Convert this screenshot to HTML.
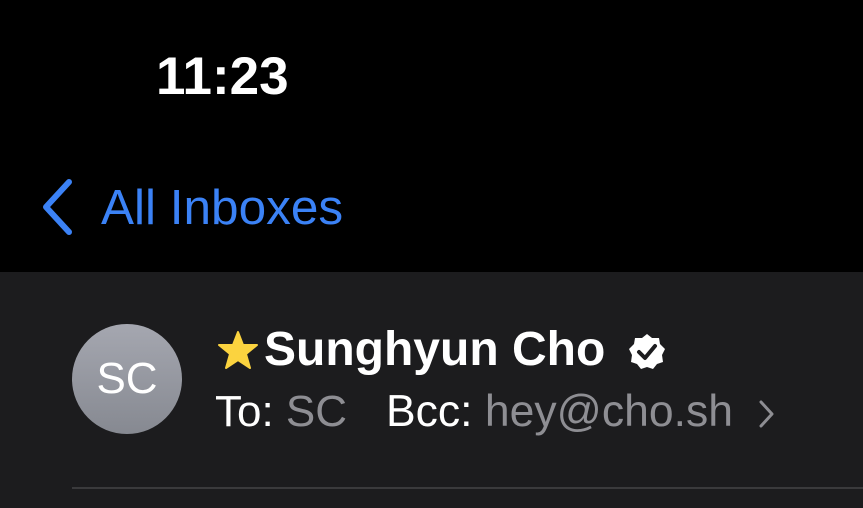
<!DOCTYPE html>
<html><head><style>
*{margin:0;padding:0}
body{width:863px;height:508px;background:#000;position:relative;overflow:hidden;font-family:"Liberation Sans",sans-serif}
.t{position:absolute;white-space:nowrap;line-height:1}
</style></head><body>
<div class="t" style="left:156px;top:50px;font-size:53px;font-weight:bold;color:#fff">11:23</div>
<svg style="position:absolute;left:38px;top:178px" width="38" height="60"><path d="M31 4 L8 29 L31 54" stroke="#3b82f6" stroke-width="6" fill="none" stroke-linecap="round" stroke-linejoin="round"/></svg>
<div class="t" style="left:101px;top:183px;font-size:49.5px;color:#3b82f6">All Inboxes</div>
<div style="position:absolute;left:0;top:272px;width:863px;height:236px;background:#1c1c1e"></div>
<div style="position:absolute;left:72px;top:324px;width:110px;height:110px;border-radius:50%;background:linear-gradient(#a5a7b0,#868991)"></div>
<div class="t" style="left:72px;top:357px;width:110px;text-align:center;font-size:44px;color:#fff">SC</div>
<svg style="position:absolute;left:216px;top:330px" width="44" height="40"><path d="M22 2 L27 15 L41 15 L30 24 L34 38 L22 30 L10 38 L14 24 L3 15 L17 15 Z" fill="#fbd33f" stroke="#fbd33f" stroke-width="2" stroke-linejoin="round"/></svg>
<div class="t" style="left:264px;top:326px;font-size:48px;font-weight:bold;color:#fff">Sunghyun Cho</div>
<svg style="position:absolute;left:626px;top:332px" width="42" height="40"><path d="M21 2 L26 6 L33 6 L34 12 L39 17 L36 23 L37 30 L31 32 L27 37 L21 35 L15 37 L11 32 L5 30 L6 23 L3 17 L8 12 L9 6 L16 6 Z" fill="#fff"/><path d="M13 20 L19 26 L29 14" stroke="#1c1c1e" stroke-width="4" fill="none" stroke-linecap="round" stroke-linejoin="round"/></svg>
<div class="t" style="left:215px;top:390px;font-size:44px;color:#fff">To: <span style="color:#8e8e93">SC</span></div>
<div class="t" style="left:386px;top:390px;font-size:44.5px;color:#fff">Bcc: <span style="color:#8e8e93">hey@cho.sh</span></div>
<svg style="position:absolute;left:756px;top:398px" width="22" height="34"><path d="M5 4 L16 16 L5 28" stroke="#8e8e93" stroke-width="3" fill="none" stroke-linecap="round" stroke-linejoin="round"/></svg>
<div style="position:absolute;left:72px;top:487px;width:791px;height:2px;background:#3a3a3c"></div>
</body></html>
